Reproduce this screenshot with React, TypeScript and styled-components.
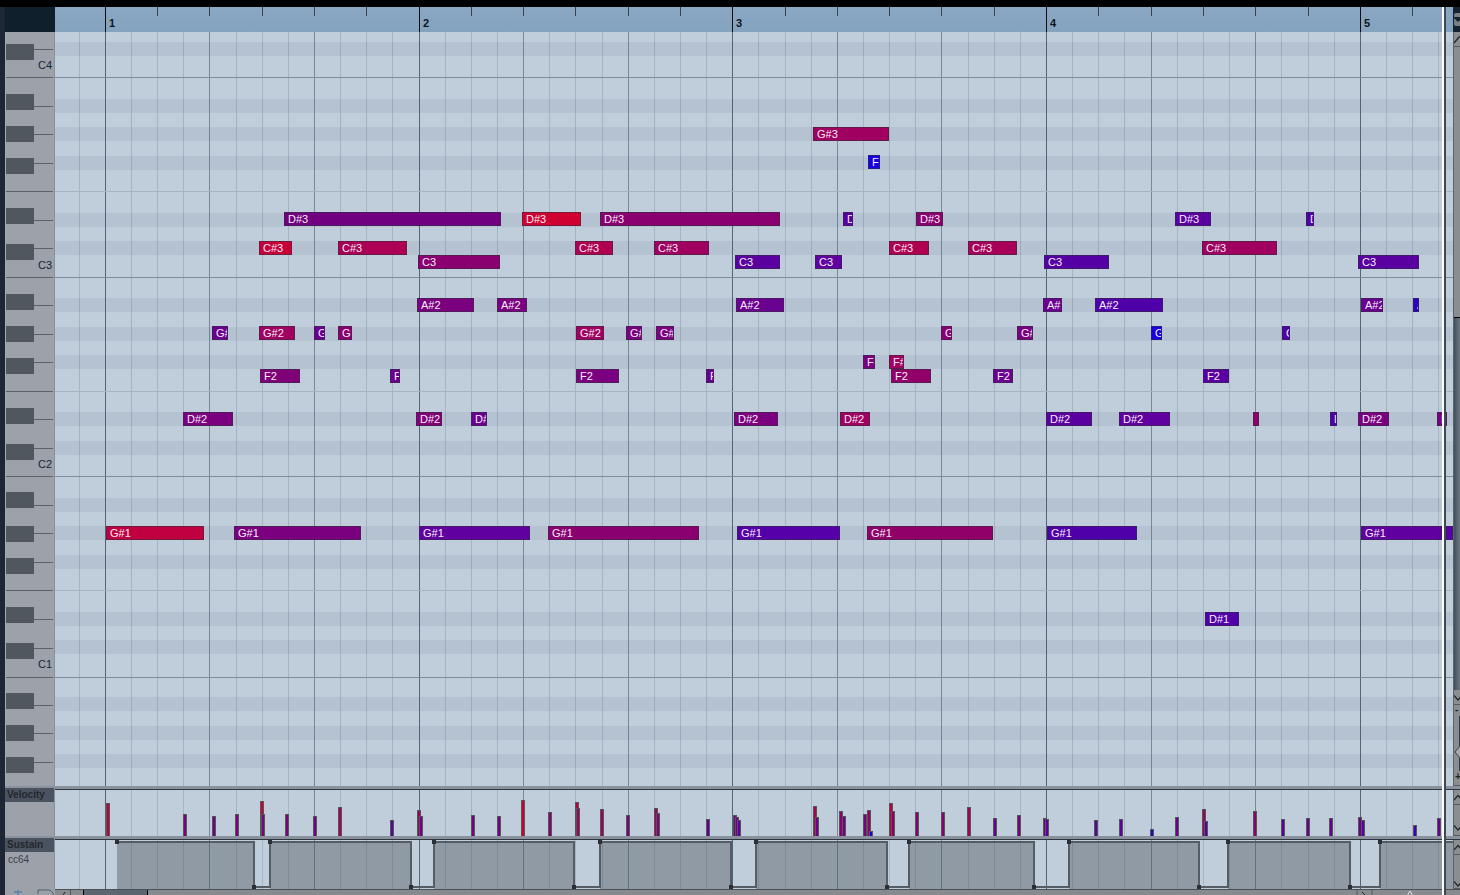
import React from "react";
import styled, { createGlobalStyle } from "styled-components";

const GlobalStyle = createGlobalStyle`
  html, body { margin: 0; padding: 0; background: #000; overflow: hidden; }
  #root { width: 1460px; height: 895px; }
  * { box-sizing: border-box; }
`;

const FONT = `"Liberation Sans", Arial, sans-serif`;
const CANVAS_W = 1398;
const C = {
  grid: "#c0cedc",
  shade: "#b5c2d1",
  panel: "#9da2aa",
  rail: "#8b8e90",
  key: "#50575f",
  hdr: "#4b5360",
  line: "#555c64",
};

/* ---------- layout ---------- */
const Page = styled.div`
  width: 1460px; height: 895px; display: flex; flex-direction: column;
  background: #000; font-family: ${FONT}; position: relative; overflow: hidden;
`;
const TopBar = styled.div` height: 7px; flex: none; background: #000; `;
const Body = styled.div` flex: 1; display: flex; min-height: 0; `;
const LeftEdge = styled.div` width: 5px; flex: none; background: #1c2634; `;
const Content = styled.div` flex: 1; display: flex; flex-direction: column; min-width: 0; `;
const Row = styled.div<{ $h: number }>` display: flex; flex: none; height: ${p => p.$h}px; `;
const Separator = styled.div<{ $h?: number }>`
  flex: none; height: ${p => p.$h ?? 4}px; background: #8a939d; border-bottom: 1px solid #2d3640;
`;
const Label = styled.div`
  width: 50px; flex: none; background: ${C.panel}; position: relative;
  border-left: 1px solid #a6abb2; border-right: 1px solid #87919b; overflow: hidden;
`;
const LaneLabel = styled(Label)` border-left: none; margin-top: -2px; position: relative; z-index: 1; `;
const Corner = styled.div` width: 50px; flex: none; background: #0f1f2b; `;
const Canvas = styled.div<{ $bg?: string }>`
  width: ${CANVAS_W}px; flex: none; position: relative; overflow: hidden; background: ${p => p.$bg ?? C.grid};
`;
const Drawing = styled.svg`
  position: absolute; left: 0; top: 0; display: block; shape-rendering: crispEdges;
`;

/* ---------- ruler ---------- */
const Ruler = styled(Canvas)` background: linear-gradient(#8aa7c3, #84a3bf); `;
const BarNumber = styled.span`
  position: absolute; top: 10px; font: bold 11px/13px ${FONT}; color: #10151c;
`;

/* ---------- keys ---------- */
const BlackKey = styled.div`
  position: absolute; left: 0; width: 28px; height: 16px; background: ${C.key};
`;
const KeyLine = styled.div<{ $full: boolean }>`
  position: absolute; height: 1px; background: #5b6169;
  left: ${p => (p.$full ? 0 : 28)}px; right: 1px;
`;
const Octave = styled.span`
  position: absolute; right: 2px; font: 11px/13px ${FONT}; color: #16233a;
`;

/* ---------- notes ---------- */
const NoteBox = styled.div<{ $c: string }>`
  position: absolute; height: 14px; padding: 0 0 0 3px; overflow: hidden; white-space: nowrap;
  background: ${p => p.$c};
  border: 1px solid color-mix(in srgb, ${p => p.$c} 45%, #30303c);
  color: #f6eef8; font: 11px/12px ${FONT};
`;
const NoteText = styled.div` overflow: hidden; width: 100%; height: 12px; `;

/* ---------- lane headers ---------- */
const LaneTitle = styled.div`
  height: 14px; background: ${C.hdr}; color: #23272d; padding-left: 2px;
  font: bold 10px/14px ${FONT};
`;
const LaneSub = styled.div` padding: 2px 0 0 3px; font: 10px/12px ${FONT}; color: #3b4048; `;

/* ---------- right rail ---------- */
const Rail = styled.div`
  width: 7px; flex: none; display: flex; flex-direction: column; background: ${C.rail}; overflow: hidden;
  border-left: 1px solid #5e6366;
`;
const DarkRail = styled.div`
  width: 7px; flex: none; background: #15222f; padding-top: 6px;
`;
const RailCell = styled.div<{ $h: number }>`
  flex: none; height: ${p => p.$h}px; position: relative; border-bottom: 1px solid #565b60; overflow: hidden;
  background: ${C.rail};
`;
const RailFill = styled.div` flex: 1; background: ${C.rail}; min-height: 0; `;
const RailThumb = styled.div<{ $h: number }>`
  flex: none; height: ${p => p.$h}px; border-top: 1px solid #000; border-left: 1px solid #000;
  margin-left: -1px; background: linear-gradient(90deg, #3f4f5e, #6d7781);
`;
const RailIcon = styled.svg` position: absolute; left: 0; top: 0; display: block; `;
const TopArrow = styled.div`
  height: 13px; background: #7b8085; position: relative; border-radius: 2px 0 0 2px; margin-left: 1px;
`;
const ZoomTrack = styled.div`
  position: absolute; left: 5px; top: 11px; width: 2px; height: 55px; background: #2e3a44;
`;
const ZoomGlyph = styled.span`
  position: absolute; left: 1px; font: bold 10px/10px ${FONT}; color: #222;
`;

/* ---------- bottom bar ---------- */
const BottomLeft = styled(Label)` background: #9aa1a9; border-left: none; border-right: none; `;
const Scrollbar = styled.div`
  flex: 1; display: flex; background: #878b8f; border-top: 1px solid #4b5056; position: relative; overflow: hidden;
`;
const ScrollCell = styled.div<{ $w: number }>`
  flex: none; width: ${p => p.$w}px; border-right: 1px solid #565b60; position: relative;
`;
const ScrollThumb = styled.div`
  flex: none; width: 65px; margin-left: 12px; margin-top: -1px;
  background: #5c6670; border: 1px solid #000; border-bottom: none;
`;
const Playhead = styled.div`
  position: absolute; left: 1442px; top: 7px; bottom: 0; width: 4px;
  border-left: 2px solid #fff; background: #3e4752;
`;

/* ---------- data ---------- */
type N = [number, number, number, string, string];
const red = "#d00030", r2 = "#c80038", r3 = "#ac0054", m1 = "#a00060", m2 = "#900068", m3 = "#8a0070",
  p1 = "#7a0080", p2 = "#6a0090", p3 = "#5a00a0", p4 = "#5000a8", b1 = "#1a00e0", b2 = "#3000c0";

const notes: N[] = [
  [813, 889, 127, "G#3", m1], [868, 880, 155, "F", b1],
  [284, 501, 212, "D#3", "#700080"], [522, 581, 212, "D#3", red], [600, 780, 212, "D#3", m3], [843, 853, 212, "D#3", p3],
  [916, 943, 212, "D#3", m3], [1175, 1211, 212, "D#3", p3], [1306, 1314, 212, "D#3", p4],
  [259, 292, 241, "C#3", r2], [338, 407, 241, "C#3", r3], [575, 613, 241, "C#3", "#b00050"], [654, 709, 241, "C#3", m1],
  [889, 929, 241, "C#3", "#b00050"], [968, 1017, 241, "C#3", "#a80058"], [1202, 1277, 241, "C#3", m1],
  [418, 500, 255, "C3", m3], [735, 780, 255, "C3", p3], [815, 842, 255, "C3", "#6000a0"], [1044, 1109, 255, "C3", "#5500a5"], [1358, 1419, 255, "C3", p3],
  [417, 474, 298, "A#2", p1], [497, 527, 298, "A#2", p1], [736, 784, 298, "A#2", p2], [1043, 1062, 298, "A#2", p2],
  [1095, 1163, 298, "A#2", p4], [1361, 1383, 298, "A#2", p2], [1413, 1419, 298, "A#2", b2],
  [212, 228, 326, "G#2", p2], [259, 295, 326, "G#2", m1], [314, 325, 326, "G#2", p2], [338, 352, 326, "G#2", m3],
  [576, 604, 326, "G#2", m1], [626, 642, 326, "G#2", p1], [656, 674, 326, "G#2", p1], [941, 952, 326, "G#2", m3],
  [1017, 1033, 326, "G#2", p1], [1151, 1162, 326, "G#2", b1], [1282, 1290, 326, "G#2", p4],
  [863, 875, 355, "F#2", p1], [889, 904, 355, "F#2", m1],
  [260, 300, 369, "F2", "#800078"], [390, 400, 369, "F2", p2], [576, 619, 369, "F2", p1], [706, 714, 369, "F2", p2],
  [891, 931, 369, "F2", m2], [993, 1013, 369, "F2", p2], [1203, 1229, 369, "F2", p3],
  [183, 233, 412, "D#2", p1], [416, 442, 412, "D#2", "#800078"], [471, 487, 412, "D#2", p2], [734, 778, 412, "D#2", p1],
  [840, 870, 412, "D#2", m1], [1046, 1092, 412, "D#2", p3], [1119, 1170, 412, "D#2", "#6000a0"], [1253, 1259, 412, "", m2],
  [1330, 1337, 412, "D#2", p4], [1358, 1389, 412, "D#2", p1], [1437, 1447, 412, "D#2", p1],
  [106, 204, 526, "G#1", "#c00040"], [234, 361, 526, "G#1", p1], [419, 530, 526, "G#1", "#6000a0"], [548, 699, 526, "G#1", m3],
  [737, 840, 526, "G#1", "#5500a8"], [867, 993, 526, "G#1", m2], [1047, 1137, 526, "G#1", p4], [1361, 1442, 526, "G#1", "#6000a0"],
  [1446, 1453, 526, "", "#5500a8"],
  [1205, 1239, 612, "D#1", p4],
];

/* outer left edge of each velocity stem */
const velocity: [number, number][] = [
  [106, 803], [183, 814], [212, 816], [235, 814], [260, 801], [261, 814], [285, 814], [313, 816], [338, 807], [390, 820],
  [417, 810], [419, 816], [471, 815], [497, 816], [521, 800], [548, 812], [575, 802], [576, 808], [600, 809], [626, 815],
  [654, 808], [656, 813], [706, 819], [733, 815], [735, 817], [737, 820], [813, 806], [815, 817], [839, 811], [842, 816],
  [863, 814], [867, 810], [869, 831], [889, 803], [891, 811], [915, 812], [941, 812], [967, 807], [993, 818], [1017, 815],
  [1043, 818], [1045, 819], [1094, 820], [1119, 819], [1150, 829], [1175, 817], [1202, 809], [1204, 821], [1253, 811],
  [1281, 819], [1306, 818], [1329, 818], [1358, 817], [1361, 820], [1413, 825], [1437, 818],
];

const sustain: [number, number][] = [
  [117, 254], [270, 411], [434, 574], [600, 731], [756, 887], [909, 1034], [1069, 1199], [1228, 1350], [1380, 1470],
];

const keyTops = [44, 94, 126, 158, 208, 244, 294, 326, 358, 408, 444, 492, 526, 558, 607, 643, 693, 725, 757];
const keyLines: [number, boolean][] = [
  [49, false], [77, true], [106, false], [134, false], [163, false], [191, true], [220, false],
  [248, false], [277, true], [305, false], [334, false], [362, false], [391, true], [419, false],
  [448, false], [476, true], [505, false], [533, false], [562, false], [590, true], [619, false],
  [648, false], [677, true], [705, false], [733, false], [762, false],
];
const octaves: [string, number][] = [["C4", 59], ["C3", 259], ["C2", 458], ["C1", 658]];
const SHADE_UNITS = [0, 4, 6, 8, 12];
const X0 = 55;

const subLines = Array.from({ length: 54 }, (_, i) => i - 1).map(n => ({
  n,
  x: Math.floor(105.3 + 26.146 * n) - X0,
}));

function GridLines({ h }: { h: number }) {
  return (
    <g>
      {subLines.map(({ n, x }) => {
        const isBar = ((n % 12) + 12) % 12 === 0;
        const isBeat = ((n % 4) + 4) % 4 === 0;
        return (
          <rect
            key={n}
            x={x}
            y={0}
            width={1}
            height={h}
            fill={isBar ? "#3c5468" : "#3c5064"}
            fillOpacity={isBar ? 0.85 : isBeat ? 0.55 : 0.2}
          />
        );
      })}
    </g>
  );
}

function EditorGrid() {
  const h = 754;
  const bands: number[] = [];
  for (let k = 0; k < 4; k++) for (const u of SHADE_UNITS) bands.push(Math.round(41.6 + 14.25 * (u + 14 * k)) - 32);
  return (
    <Drawing width={CANVAS_W} height={h}>
      {bands.map(y => <rect key={y} x={0} y={y} width={CANVAS_W} height={14} fill={C.shade} />)}
      <GridLines h={h} />
      {keyLines.filter(l => l[1]).map(([y], i) => (
        <rect key={y} x={0} y={y - 32} width={CANVAS_W} height={1} fill={i % 2 === 0 ? "#7f8d9b" : "#a7b3c0"} />
      ))}
    </Drawing>
  );
}

function velColor(h: number) {
  const t = Math.max(0, Math.min(1, (h - 5) / 31));
  const r = Math.round(26 + (208 - 26) * t);
  const b = Math.round(224 + (48 - 224) * t);
  return `rgb(${r},0,${b})`;
}

function VelocityChart() {
  const h = 46;
  return (
    <Drawing width={CANVAS_W} height={h}>
      <GridLines h={h} />
      {velocity.map(([x, top]) => {
        const vh = 836 - top;
        return (
          <g key={`${x}-${top}`}>
            <rect x={x - X0} y={top - 790} width={4} height={vh} fill="#555" />
            <rect x={x + 1 - X0} y={top - 789} width={2} height={vh - 1} fill={velColor(vh)} />
          </g>
        );
      })}
    </Drawing>
  );
}

function SustainChart() {
  const h = 49;
  const hi = 2;
  const lo = 47;
  let d = "";
  sustain.forEach(([a, b], i) => {
    const xa = a - X0, xb = b - X0;
    d += `${i === 0 ? `M${xa} ${hi}` : `L${xa} ${lo}L${xa} ${hi}`}L${xb} ${hi}L${xb} ${lo}`;
  });
  return (
    <Drawing width={CANVAS_W} height={h}>
      {sustain.map(([a, b]) => <rect key={a} x={a - X0} y={hi} width={b - a} height={h} fill="#8f9aa4" />)}
      <GridLines h={h} />
      <path d={d} fill="none" stroke={C.line} strokeWidth={2} />
      {sustain.map(([a, b]) => (
        <g key={a}>
          <rect x={a - X0 - 2} y={hi - 2} width={4} height={4} fill="#2b2f33" />
          {b < 1400 && <rect x={b - X0 - 2} y={lo - 2} width={4} height={4} fill="#2b2f33" />}
        </g>
      ))}
    </Drawing>
  );
}

function RulerTicks() {
  return (
    <Drawing width={CANVAS_W} height={25}>
      {subLines.filter(s => ((s.n % 2) + 2) % 2 === 0 && s.n >= 0).map(({ n, x }) =>
        n % 12 === 0
          ? <rect key={n} x={x} y={0} width={1} height={25} fill="#0b0f14" />
          : <rect key={n} x={x} y={0} width={1} height={9} fill="#3a4450" />
      )}
    </Drawing>
  );
}

function Chevron({ up }: { up?: boolean }) {
  return (
    <RailIcon width={7} height={15} viewBox="0 0 7 15">
      <path d={up ? "M0 10L4 5.5L8 10" : "M0 5.5L4 10L8 5.5"} fill="none" stroke="#23282d" strokeWidth={1.2} />
    </RailIcon>
  );
}

export default function App() {
  return (
    <Page>
      <GlobalStyle />
      <TopBar />
      <Body>
        <LeftEdge />
        <Content>
          <Row $h={25}>
            <Corner />
            <Ruler>
              <RulerTicks />
              {[1, 2, 3, 4, 5].map((b, i) => (
                <BarNumber key={b} style={{ left: Math.floor(50.3 + 313.75 * i) + 4 }}>{b}</BarNumber>
              ))}
            </Ruler>
            <DarkRail>
              <TopArrow>
                <RailIcon width={7} height={13} viewBox="0 0 7 13">
                  <path d="M0 4H7V6L4 9L0 5Z" fill="#15222f" />
                </RailIcon>
              </TopArrow>
            </DarkRail>
          </Row>

          <Row $h={754}>
            <Label>
              {keyTops.map(y => <BlackKey key={y} style={{ top: y - 32 }} />)}
              {keyLines.map(([y, full]) => <KeyLine key={y} $full={full} style={{ top: y - 32 }} />)}
              {octaves.map(([t, y]) => <Octave key={t} style={{ top: y - 32 }}>{t}</Octave>)}
            </Label>
            <Canvas>
              <EditorGrid />
              {notes.map(([a, b, y, t, c]) => (
                <NoteBox key={`${a}-${y}`} $c={c} style={{ left: a - X0, top: y - 32, width: b - a }}>
                  <NoteText>{t}</NoteText>
                </NoteBox>
              ))}
            </Canvas>
            <Rail>
              <RailCell $h={15}>
                <RailIcon width={7} height={15} viewBox="0 0 7 15">
                  <path d="M0 11L5 5H7" fill="none" stroke="#23282d" strokeWidth={1.3} />
                </RailIcon>
              </RailCell>
              <RailFill />
              <RailThumb $h={373} />
              <RailCell $h={15}><Chevron /></RailCell>
              <RailCell $h={81}>
                <ZoomGlyph style={{ top: 0 }}>-</ZoomGlyph>
                <ZoomTrack />
                <RailIcon width={7} height={81} viewBox="0 0 7 81">
                  <path d="M6 41L1 47L6 53" fill="#a8acb0" stroke="#3a3f44" />
                </RailIcon>
                <ZoomGlyph style={{ top: 67 }}>+</ZoomGlyph>
              </RailCell>
            </Rail>
          </Row>

          <Separator />

          <Row $h={46}>
            <LaneLabel>
              <LaneTitle>Velocity</LaneTitle>
            </LaneLabel>
            <Canvas><VelocityChart /></Canvas>
            <Rail>
              <RailCell $h={15}><Chevron up /></RailCell>
              <RailFill />
              <RailCell $h={16}><Chevron /></RailCell>
            </Rail>
          </Row>

          <Separator />

          <Row $h={49}>
            <LaneLabel>
              <LaneTitle>Sustain</LaneTitle>
              <LaneSub>cc64</LaneSub>
            </LaneLabel>
            <Canvas><SustainChart /></Canvas>
            <Rail>
              <RailCell $h={15}><Chevron up /></RailCell>
              <RailFill />
              <RailCell $h={13}><Chevron /></RailCell>
            </Rail>
          </Row>

          <Row $h={6}>
            <BottomLeft>
              <RailIcon width={50} height={6} viewBox="0 0 50 6">
                <path d="M9 3H17M13 1V6" stroke="#5a7fa8" strokeWidth={1.4} fill="none" />
                <path d="M33 5V1H45L48 4V6" stroke="#555c64" fill="none" />
              </RailIcon>
            </BottomLeft>
            <Scrollbar>
              <ScrollCell $w={16}>
                <RailIcon width={16} height={6} viewBox="0 0 16 6">
                  <path d="M10 2L8 5L10 7" stroke="#222" fill="none" />
                </RailIcon>
              </ScrollCell>
              <ScrollThumb />
              <RailIcon width={1405} height={6} viewBox="0 0 1405 6">
                <path d="M1302 0V6M1317 0V6" stroke="#565b60" fill="none" />
                <path d="M1307 2L1310 5L1308 7" stroke="#222" fill="none" />
                <path d="M1352 6L1355 1L1358 6" stroke="#e0e2e4" fill="none" />
              </RailIcon>
            </Scrollbar>
          </Row>
        </Content>
      </Body>
      <Playhead />
    </Page>
  );
}
